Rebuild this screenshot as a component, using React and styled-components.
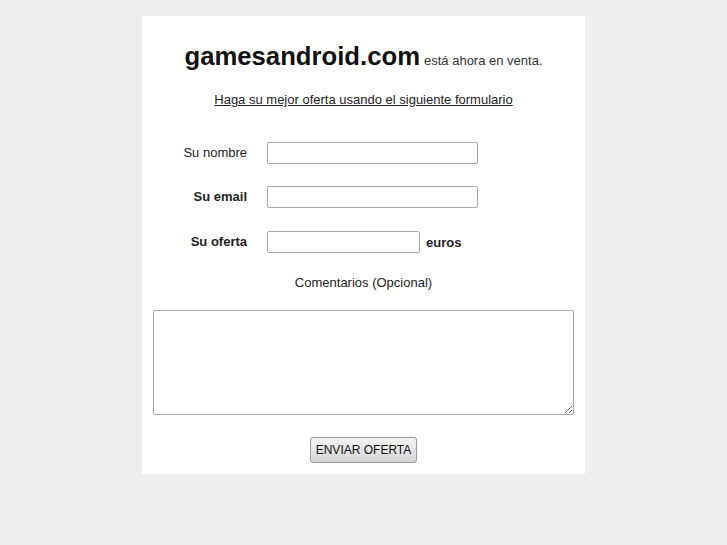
import styled, { createGlobalStyle } from "styled-components";

const GlobalStyle = createGlobalStyle`
  body {
    margin: 0;
    background: #eeeeee;
    font-family: "Liberation Sans", Arial, sans-serif;
    color: #222;
  }
`;

const Page = styled.div`
  padding-top: 16px;
  display: flex;
  justify-content: center;
`;

const Card = styled.div`
  width: 443px;
  box-sizing: border-box;
  background: #fff;
  padding: 26px 11px 11px;
  display: flex;
  flex-direction: column;
  align-items: center;
`;

const Heading = styled.div`
  height: 32px;
  display: flex;
  align-items: baseline;
  gap: 4px;
`;

const Domain = styled.span`
  font-size: 25.7px;
  font-weight: bold;
  color: #111;
`;

const Tagline = styled.span`
  font-size: 13px;
  color: #333;
`;

const OfferLink = styled.a`
  margin-top: 18px;
  font-size: 13px;
  color: #222;
  text-decoration: underline;
`;

const Form = styled.form`
  margin-top: 35px;
  width: 100%;
  display: flex;
  flex-direction: column;
  align-items: center;
`;

const Row = styled.div`
  align-self: stretch;
  display: flex;
  align-items: center;
  height: 22px;
  margin-bottom: ${(p) => p.$space || 22}px;
`;

const Label = styled.label`
  width: 94px;
  text-align: right;
  margin-right: 20px;
  margin-top: -1px;
  font-size: 13px;
  font-weight: ${(p) => (p.$bold ? "bold" : "normal")};
  color: #222;
`;

const Input = styled.input`
  box-sizing: border-box;
  width: ${(p) => p.$width}px;
  height: 22px;
  border: 1px solid #a8a8a8;
  border-radius: 2px;
  padding: 2px 4px;
  font-family: inherit;
  font-size: 13px;
`;

const Unit = styled.span`
  margin-left: 6px;
  font-size: 13px;
  font-weight: bold;
`;

const Caption = styled.div`
  font-size: 13px;
  color: #222;
`;

const Comments = styled.textarea`
  box-sizing: border-box;
  margin-top: 20px;
  width: 421px;
  height: 105px;
  border: 1px solid #a8a8a8;
  border-radius: 2px;
  font-family: inherit;
  font-size: 13px;
`;

const Submit = styled.button`
  margin-top: 22px;
  width: 107px;
  height: 26px;
  padding: 0;
  white-space: nowrap;
  font-family: inherit;
  font-size: 12px;
  color: #111;
  border: 1px solid #999;
  border-radius: 3px;
  background: linear-gradient(#f4f4f4, #d6d6d6);
`;

export default function App() {
  return (
    <>
      <GlobalStyle />
      <Page>
        <Card>
          <Heading>
            <Domain>gamesandroid.com</Domain>
            <Tagline>está ahora en venta.</Tagline>
          </Heading>
          <OfferLink href="#">Haga su mejor oferta usando el siguiente formulario</OfferLink>
          <Form onSubmit={(e) => e.preventDefault()}>
            <Row>
              <Label>Su nombre</Label>
              <Input $width={211} />
            </Row>
            <Row $space={23}>
              <Label $bold>Su email</Label>
              <Input $width={211} />
            </Row>
            <Row $space={22}>
              <Label $bold>Su oferta</Label>
              <Input $width={153} />
              <Unit>euros</Unit>
            </Row>
            <Caption>Comentarios (Opcional)</Caption>
            <Comments />
            <Submit type="submit">ENVIAR OFERTA</Submit>
          </Form>
        </Card>
      </Page>
    </>
  );
}
